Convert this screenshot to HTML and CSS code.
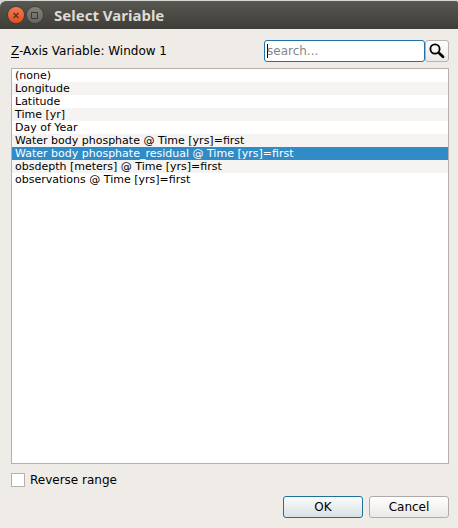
FILE: index.html
```html
<!DOCTYPE html>
<html lang="en">
<head>
<meta charset="utf-8">
<title>Select Variable</title>
<link rel="stylesheet" href="styles.css">
</head>
<body>
<main class="dialog">
  <header class="titlebar">
    <button class="window-button close" type="button" aria-label="Close">
      <svg viewBox="0 0 16 16" width="16" height="16"><path d="M5.5 6l5 5M10.5 6l-5 5" fill="none" stroke="#5c2c1a" stroke-width="1.3"/></svg>
    </button>
    <button class="window-button maximize" type="button" aria-label="Maximize">
      <svg viewBox="0 0 16 16" width="16" height="16"><path d="M4.5 5.5h6v6h-6z" fill="none" stroke="#3a3935" stroke-width="1"/></svg>
    </button>
    <h1 class="title">Select Variable</h1>
  </header>
  <form class="content">
    <div class="top-row">
      <label class="label" for="variables"><u>Z</u>-Axis Variable: Window 1</label>
      <div class="search">
        <input class="search-input" type="text" placeholder="search..." aria-label="Search">
        <button class="search-button" type="button" aria-label="Find">
          <svg viewBox="0 0 16 16" width="16" height="16" fill="none" stroke="#000"><circle cx="6" cy="6" r="4.6" stroke-width="1.8"/><path d="M9.3 9.3l2 2" stroke-width="2"/><path d="M10.8 10.8l3.2 3" stroke-width="2.8" stroke-linecap="round"/></svg>
        </button>
      </div>
    </div>
    <select class="list" id="variables" size="9">
      <option>(none)</option>
      <option>Longitude</option>
      <option>Latitude</option>
      <option>Time [yr]</option>
      <option>Day of Year</option>
      <option>Water body phosphate @ Time [yrs]=first</option>
      <option selected>Water body phosphate_residual @ Time [yrs]=first</option>
      <option>obsdepth [meters] @ Time [yrs]=first</option>
      <option>observations @ Time [yrs]=first</option>
    </select>
    <label class="check-row"><input class="checkbox" type="checkbox">Reverse range</label>
    <div class="actions">
      <button class="button primary" type="submit">OK</button>
      <button class="button" type="button">Cancel</button>
    </div>
  </form>
</main>
</body>
</html>
```
FILE: styles.css
```css
* {
  box-sizing: border-box;
}

body {
  margin: 0;
  background: #efebe7;
  color: #000;
  font: 12px/16px "DejaVu Sans", sans-serif;
}

.dialog {
  display: flex;
  flex-direction: column;
  min-height: 100vh;
  padding-top: 1px;
  background: linear-gradient(#d5d8d5 8px, #efebe7 8px);
}

.titlebar {
  display: flex;
  align-items: center;
  gap: 3px;
  height: 28px;
  padding: 0 8px 1px;
  border-radius: 6px 2px 0 0;
  border-top: 1px solid #5b5a53;
  background: linear-gradient(#57564f, #3e3d39);
}

.window-button {
  display: flex;
  width: 16px;
  height: 16px;
  padding: 0;
  border: 0;
  border-radius: 50%;
  box-shadow: 0 0 1px 1px #42413c;
}

.close {
  background: linear-gradient(#f37b55, #e2501e);
}

.maximize {
  background: linear-gradient(#84827a, #66655e);
}

.title {
  margin: 0 0 0 8px;
  color: #dfdbd2;
  font: bold 15px/20px "Noto Sans", sans-serif;
}

.content {
  display: flex;
  flex: 1;
  flex-direction: column;
  padding: 11px 9px 10px 11px;
}

.top-row {
  display: flex;
  align-items: center;
  justify-content: space-between;
  height: 22px;
  margin-bottom: 6px;
}

.label u {
  text-underline-offset: 2px;
}

.search {
  display: flex;
}

.search-input {
  width: 161px;
  height: 22px;
  padding: 0 2px;
  border: 1px solid #1f72a6;
  border-radius: 3px;
  outline: 0;
  background: linear-gradient(#000, #000) 2px 3px / 1px 14px no-repeat #fff;
  font: inherit;
}

.search-input::placeholder {
  color: #868686;
}

.search-button {
  display: flex;
  align-items: center;
  justify-content: center;
  width: 24px;
  height: 22px;
  padding: 0;
  border: 1px solid #b7b4b0;
  border-radius: 3px;
  background: linear-gradient(#fefefe, #ebe9e7);
}

.list {
  flex: 1;
  width: 100%;
  padding: 0;
  border: 1px solid #b5b2ae;
  border-radius: 0;
  outline: 0;
  background: #fff;
  color: #000;
  font: 11px/13px "DejaVu Sans", sans-serif;
  overflow: hidden;
}

.list option {
  height: 13px;
  min-height: 13px;
  padding: 0 3px;
  line-height: 13px;
}

.list option:nth-child(even) {
  background: #f5f4f2;
}

.list option:checked {
  background: linear-gradient(#308cc6, #308cc6);
  color: #fff;
}

.check-row {
  display: flex;
  align-items: center;
  align-self: flex-start;
  gap: 5px;
  margin: 8px 0;
}

.checkbox {
  width: 14px;
  height: 14px;
  margin: 0;
  border: 1px solid #b5b2ae;
  background: #fff;
  appearance: none;
}

.checkbox:checked {
  background: #308cc6;
  box-shadow: inset 0 0 0 2px #fff;
}

.actions {
  display: flex;
  justify-content: flex-end;
  gap: 6px;
}

.button {
  width: 80px;
  height: 22px;
  padding: 0 0 1px;
  border: 1px solid #aeaba8;
  border-radius: 3px;
  background: linear-gradient(#fefefe, #ebe9e7);
  color: #000;
  font: inherit;
}

.primary {
  border-color: #1f6f98;
  background: linear-gradient(#fafbfb, #d9e1e5);
}
```
